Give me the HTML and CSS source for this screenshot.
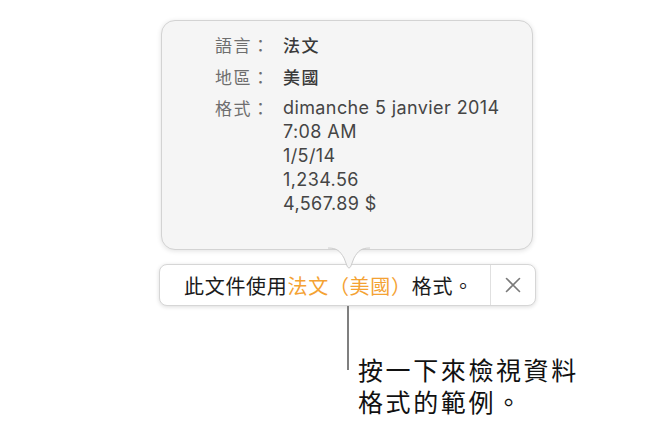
FILE: index.html
```html
<!DOCTYPE html>
<html lang="zh-Hant">
<head>
    <meta charset="UTF-8">
    <meta name="viewport" content="width=device-width, initial-scale=1.0">
    <title>資料格式</title>
    <link rel="stylesheet" href="styles.css">
</head>
<body>

    <div class="stage">
        <div class="popover">
            <div class="info">
                <span class="label">語言：</span>
                <span class="value strong">法文</span>

                <span class="label">地區：</span>
                <span class="value strong">美國</span>

                <span class="label">格式：</span>
                <span class="value">dimanche 5 janvier 2014<br>7:08 AM<br>1/5/14<br>1,234.56<br>4,567.89 $</span>
            </div>
            <svg class="arrow" width="42" height="24" viewBox="0 0 42 24">
                <path d="M0 1 C9 1 12 4 16 11 L19.4 19.8 Q21 22.6 22.6 19.8 L26 11 C30 4 33 1 42 1 Z" fill="#f5f5f5"/>
                <path d="M0 1 C9 1 12 4 16 11 L19.4 19.8 Q21 22.6 22.6 19.8 L26 11 C30 4 33 1 42 1" fill="none" stroke="#cccccc" stroke-width="1"/>
            </svg>
        </div>

        <div class="bar">
            <div class="message">此文件使用<span class="accent">法文（美國）</span>格式。</div>
            <button class="close" aria-label="關閉">
                <svg width="16" height="16" viewBox="0 0 16 16">
                    <path d="M1.5 1.5 L14.5 14.5 M14.5 1.5 L1.5 14.5" stroke="#7a7a7a" stroke-width="1.6" stroke-linecap="round"/>
                </svg>
            </button>
        </div>

        <div class="callout">
            <div class="leader"></div>
            <div class="callout-text">
                <span class="line">按一下來檢視資料</span>
                <span class="line">格式的範例。</span>
            </div>
        </div>
    </div>

</body>
</html>
```

FILE: styles.css
```css
body {
    margin: 0;
    background: #ffffff;
    font-family: Inter, "Noto Sans CJK TC", sans-serif;
    overflow: hidden;
}
.stage {
    padding-top: 20px;
}
.popover {
    position: relative;
    box-sizing: border-box;
    width: 372px;
    height: 230px;
    margin-left: 161px;
    padding-top: 12px;
    background: #f5f5f5;
    border: 1px solid #d3d3d3;
    border-radius: 14px;
    box-shadow: 0 1px 5px rgba(0, 0, 0, 0.12);
    z-index: 2;
}
.info {
    display: grid;
    grid-template-columns: 56px auto;
    column-gap: 12px;
    row-gap: 7.5px;
    padding-left: 53px;
    font-size: 18px;
    line-height: 24px;
}
.label {
    font-family: "Noto Sans CJK TC", sans-serif;
    font-size: 17px;
    letter-spacing: 1.5px;
    color: #6e6e6e;
    white-space: nowrap;
}
.value {
    color: #454545;
    letter-spacing: 0.4px;
    white-space: nowrap;
}
.value.strong {
    font-family: "Noto Sans CJK TC", sans-serif;
    font-size: 17px;
    font-weight: 500;
    letter-spacing: 1.5px;
    color: #3a3a3a;
}
.arrow {
    position: absolute;
    left: 166px;
    top: 100%;
    margin-top: -2px;
    display: block;
}
.bar {
    display: flex;
    align-items: stretch;
    box-sizing: border-box;
    width: 377px;
    height: 42px;
    margin-left: 159px;
    margin-top: 14px;
    background: #ffffff;
    border: 1px solid #d6d6d6;
    border-radius: 8px;
    box-shadow: 0 1px 4px rgba(0, 0, 0, 0.14);
}
.message {
    flex: 1;
    display: flex;
    align-items: center;
    padding-left: 24px;
    font-family: "Noto Sans CJK TC", sans-serif;
    font-size: 20px;
    letter-spacing: 0.7px;
    color: #1c1c1c;
    white-space: nowrap;
}
.accent {
    color: #f4a233;
}
.close {
    width: 45px;
    display: flex;
    align-items: center;
    justify-content: center;
    padding: 0;
    border: none;
    border-left: 1px solid #e0e0e0;
    background: transparent;
}
.callout {
    display: flex;
    align-items: flex-start;
    gap: 9px;
    margin-left: 347px;
}
.leader {
    width: 2px;
    height: 64px;
    background: #7f7f7f;
}
.callout-text {
    margin-top: 47px;
    font-family: "Noto Sans CJK TC", sans-serif;
    font-size: 25px;
    letter-spacing: 2.6px;
    color: #111111;
    white-space: nowrap;
}
.line {
    display: block;
    height: 32px;
    line-height: 32px;
}
```
